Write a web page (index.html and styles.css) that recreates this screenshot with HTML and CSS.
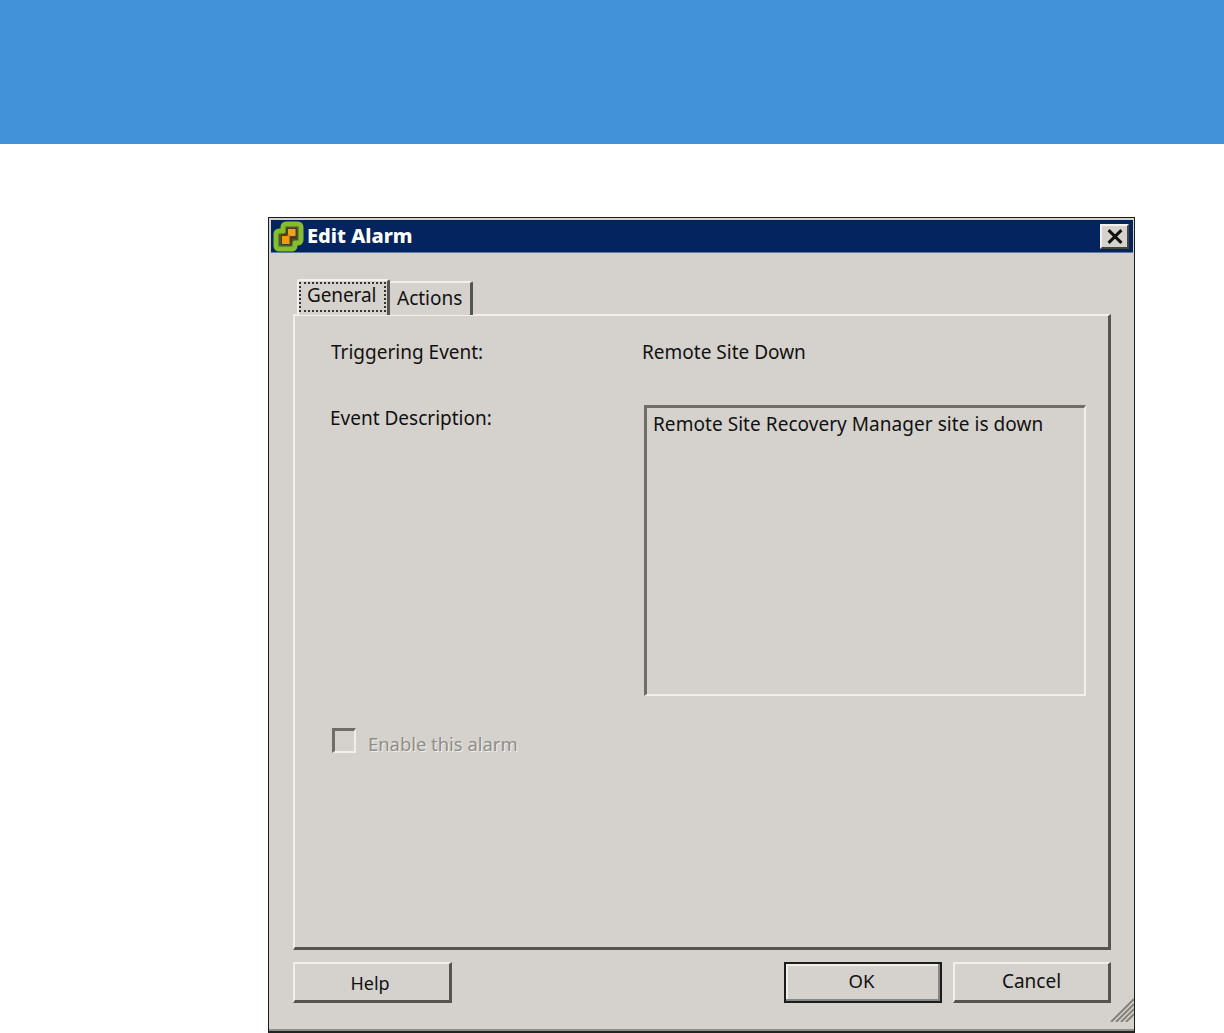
FILE: index.html
```html
<!DOCTYPE html>
<html lang="en">
<head>
<meta charset="utf-8">
<title>Edit Alarm</title>
<link rel="stylesheet" href="styles.css">
</head>
<body>
<header class="banner"></header>
<main class="stage">
  <section class="dialog">
    <div class="titlebar">
      <svg class="app-icon" viewBox="0 0 31 31" aria-hidden="true">
        <path d="M13 3h12a3 3 0 0 1 3 3v13a3 3 0 0 1-3 3h-3v3a3 3 0 0 1-3 3h-13a3 3 0 0 1-3-3v-12a3 3 0 0 1 3-3h4v-4a3 3 0 0 1 3-3z" fill="#4b5a2c" stroke="#86bd2c" stroke-width="5" stroke-linejoin="round"/>
        <path d="M13 7h11v11h-5v6h-11v-11h5z" fill="#4a3f1c"/>
        <rect x="15" y="8" width="7.500" height="7" fill="#f2a514"/>
        <rect x="9" y="15" width="7.500" height="8" fill="#f39b0d"/>
        <rect x="14.500" y="13.500" width="2.500" height="2.500" fill="#c98a1a"/>
      </svg>
      <span class="title">Edit Alarm</span>
      <button class="close" aria-label="Close">
        <svg viewBox="0 0 16 14" class="close-x" aria-hidden="true"><path d="M2 1l12 12M14 1l-12 12" stroke="#111" stroke-width="2.800" fill="none"/></svg>
      </button>
    </div>
    <div class="body">
      <div class="tabs">
        <div class="tab tab-active"><span class="tab-focus">General</span></div>
        <div class="tab">Actions</div>
      </div>
      <div class="panel">
        <div class="row row-event">
          <div class="label">Triggering Event:</div>
          <div class="value">Remote Site Down</div>
        </div>
        <div class="row row-desc">
          <div class="label label-desc">Event Description:</div>
          <div class="textbox">Remote Site Recovery Manager site is down</div>
        </div>
        <div class="check-row">
          <span class="checkbox"></span>
          <span class="check-label">Enable this alarm</span>
        </div>
      </div>
      <div class="actions">
        <button class="btn btn-help">Help</button>
        <div class="actions-right">
          <button class="btn btn-default">OK</button>
          <button class="btn btn-cancel">Cancel</button>
        </div>
      </div>
    </div>
    <svg class="grip" viewBox="0 0 24 24" aria-hidden="true">
      <path d="M24 1L1 24M24 6L6 24M24 11L11 24M24 16L16 24" stroke="#858279" stroke-width="2" fill="none"/>
    </svg>
  </section>
</main>
</body>
</html>
```
FILE: styles.css
```css
* { box-sizing: border-box; }
html, body { margin: 0; padding: 0; background: #fff; }
body { height: 1033px; overflow: hidden; font-family: "Noto Sans", "Liberation Sans", sans-serif; color: #111; }

.banner { height: 144px; background: #4192d9; }
.stage { padding: 73px 0 0 268px; }

.dialog {
  position: relative;
  width: 867px;
  height: 816px;
  background: #d5d2cd;
  border: 1px solid #1c1c1c;
  border-bottom: 2px solid #222;
  padding: 2px 1px 0 2px;
  font-size: 19px;
  line-height: 24px;
  box-shadow: inset 0 -2px 0 #8f8d88;
}

.titlebar {
  height: 33px;
  background: #03245f;
  display: flex;
  align-items: center;
  padding: 0 4px 0 2px;
  border-bottom: 1px solid #5c7aa6;
}
.app-icon { width: 31px; height: 31px; flex: none; }
.title { margin-left: 3px; color: #fff; font-weight: 800; font-size: 20px; }
.close {
  margin-left: auto;
  width: 29px;
  height: 25px;
  padding: 0;
  background: #d5d2cd;
  border: 2px solid;
  border-color: #f2f1ee #45443f #45443f #f2f1ee;
  display: flex;
  align-items: center;
  justify-content: center;
}
.close-x { width: 18px; height: 15px; display: block; }

.body { padding: 25px 22px 0 22px; }

.tabs { display: flex; padding-left: 4px; align-items: flex-end; height: 37px; position: relative; z-index: 1; margin-bottom: -1px; }
.tab {
  height: 34px;
  width: 83px;
  padding: 3px 0 0 7px;
  border: solid;
  border-width: 2px 3px 0 0;
  border-color: #f0efec #55544f transparent #f0efec;
  border-radius: 2px 2px 0 0;
  background: #d5d2cd;
}
.tab-active {
  height: 36px;
  width: 93px;
  padding: 1px 0 0 0;
  border-left-width: 2px;
}
.tab-focus {
  display: block;
  width: 87px;
  height: 30px;
  border: 2px dotted #333;
  padding: 0 0 0 6px;
  line-height: 22px;
  letter-spacing: -0.1px;
}

.panel {
  height: 636px;
  border: solid;
  border-width: 2px 3px 3px 2px;
  border-color: #f0efec #55544f #55544f #f0efec;
  padding: 24px 24px 0 36px;
}
.row { display: grid; grid-template-columns: 311px 1fr; }
.row-event { height: 24px; }
.label { white-space: nowrap; }
.row-desc { margin-top: 41px; grid-template-columns: 313px 442px; }
.label-desc { margin-top: 1px; margin-left: -1px; }
.textbox {
  height: 291px;
  border: solid;
  border-width: 3px 2px 2px 3px;
  border-color: #6e6d68 #f0efec #f0efec #6e6d68;
  padding: 4px 0 0 6px;
  white-space: nowrap;
  letter-spacing: 0.05px;
}

.check-row { display: flex; align-items: center; margin-top: 32px; margin-left: 1px; }
.checkbox {
  width: 24px;
  height: 25px;
  border: solid;
  border-width: 3px 2px 2px 3px;
  border-color: #6e6d68 #f0efec #f0efec #6e6d68;
}
.check-label { margin-left: 12px; color: #8f8d88; text-shadow: 1px 1px 0 #f0efec; position: relative; top: 3px; font-size: 18.4px; }

.actions { display: flex; justify-content: space-between; margin-top: 12px; }
.actions-right { display: flex; gap: 11px; }
.btn {
  width: 158px;
  height: 41px;
  padding: 0;
  background: #d5d2cd;
  border: solid;
  border-width: 2px 3px 3px 2px;
  border-color: #f0efec #55544f #55544f #f0efec;
  font: inherit;
  color: #111;
}
.btn-help { width: 159px; padding: 1px 4px 0 0; font-size: 18px; }
.btn-cancel { padding: 0 0 2px 0; }
.btn-default { border: 2px solid #1c1c1c; box-shadow: inset -2px -2px 0 #8a8883, inset 2px 2px 0 #f0efec; padding: 0 3px 4px 0; font-size: 18.5px; }

.grip { position: absolute; right: 0; bottom: 9px; width: 24px; height: 24px; }
```
